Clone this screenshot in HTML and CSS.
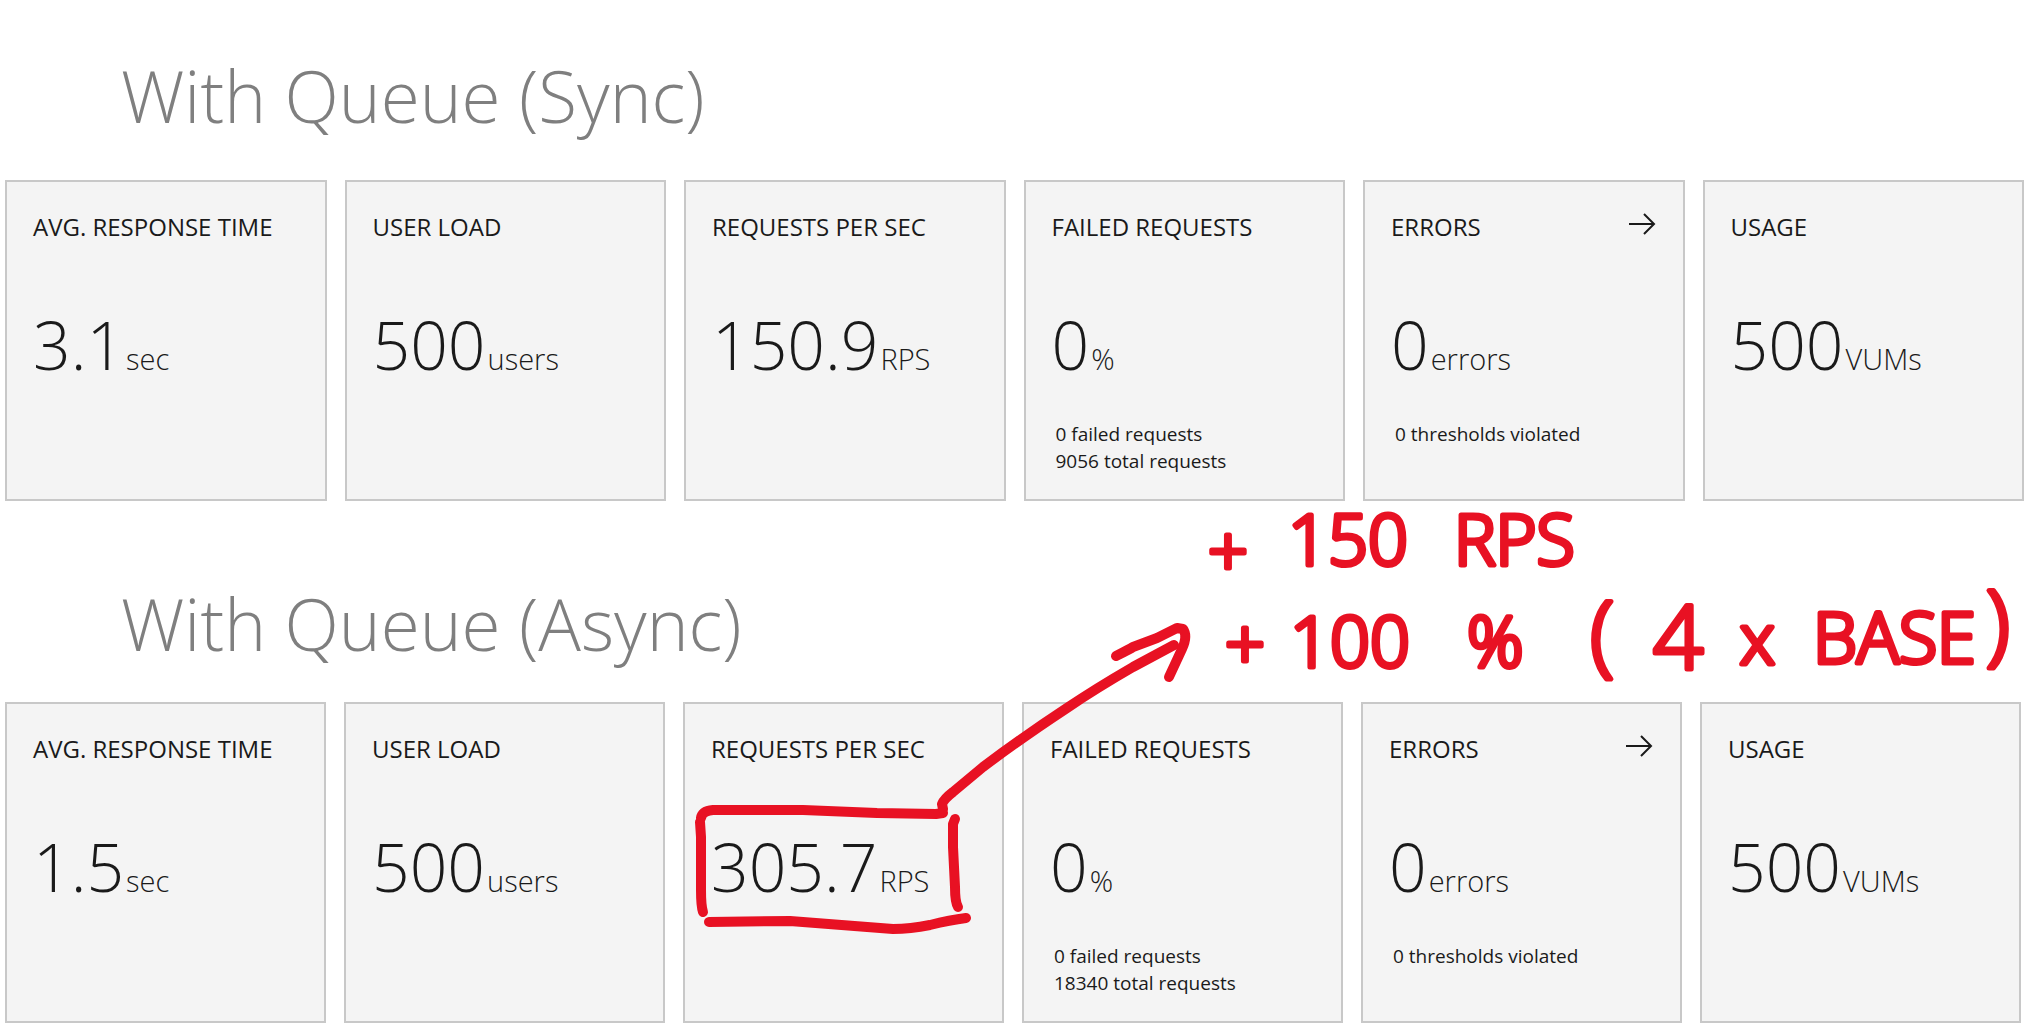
FILE: index.html
```html
<!DOCTYPE html>
<html lang="en">
<head>
<meta charset="utf-8">
<title>Load test results</title>
<link rel="stylesheet" href="styles.css">
</head>
<body>
<main class="board">
  <section class="run">
    <h1 class="run-title">With Queue (Sync)</h1>
    <div class="cards">
      <article class="card">
        <h2 class="card-title">AVG. RESPONSE TIME</h2>
        <p class="metric"><span class="value">3.1</span><span class="unit">sec</span></p>
      </article>
      <article class="card">
        <h2 class="card-title">USER LOAD</h2>
        <p class="metric"><span class="value">500</span><span class="unit">users</span></p>
      </article>
      <article class="card">
        <h2 class="card-title">REQUESTS PER SEC</h2>
        <p class="metric"><span class="value">150.9</span><span class="unit">RPS</span></p>
      </article>
      <article class="card">
        <h2 class="card-title">FAILED REQUESTS</h2>
        <p class="metric"><span class="value">0</span><span class="unit">%</span></p>
        <p class="notes">0 failed requests<br>9056 total requests</p>
      </article>
      <article class="card">
        <div class="card-head">
          <h2 class="card-title">ERRORS</h2>
          <a class="more" href="#errors-sync" aria-label="Show errors"><svg class="more-icon" viewBox="0 0 28 22"><path d="M1 11H26M16 1L26 11L16 21"/></svg></a>
        </div>
        <p class="metric"><span class="value">0</span><span class="unit">errors</span></p>
        <p class="notes">0 thresholds violated</p>
      </article>
      <article class="card">
        <h2 class="card-title">USAGE</h2>
        <p class="metric"><span class="value">500</span><span class="unit">VUMs</span></p>
      </article>
    </div>
  </section>

  <section class="run run-async">
    <h1 class="run-title">With Queue (Async)</h1>
    <div class="cards">
      <article class="card">
        <h2 class="card-title">AVG. RESPONSE TIME</h2>
        <p class="metric"><span class="value">1.5</span><span class="unit">sec</span></p>
      </article>
      <article class="card">
        <h2 class="card-title">USER LOAD</h2>
        <p class="metric"><span class="value">500</span><span class="unit">users</span></p>
      </article>
      <article class="card">
        <h2 class="card-title">REQUESTS PER SEC</h2>
        <p class="metric"><span class="value">305.7</span><span class="unit">RPS</span></p>
      </article>
      <article class="card">
        <h2 class="card-title">FAILED REQUESTS</h2>
        <p class="metric"><span class="value">0</span><span class="unit">%</span></p>
        <p class="notes">0 failed requests<br>18340 total requests</p>
      </article>
      <article class="card">
        <div class="card-head">
          <h2 class="card-title">ERRORS</h2>
          <a class="more" href="#errors-async" aria-label="Show errors"><svg class="more-icon" viewBox="0 0 28 22"><path d="M1 11H26M16 1L26 11L16 21"/></svg></a>
        </div>
        <p class="metric"><span class="value">0</span><span class="unit">errors</span></p>
        <p class="notes">0 thresholds violated</p>
      </article>
      <article class="card">
        <h2 class="card-title">USAGE</h2>
        <p class="metric"><span class="value">500</span><span class="unit">VUMs</span></p>
      </article>
    </div>
  </section>

  <!-- Red pen annotations over the cards -->
  <svg class="ink" viewBox="0 0 2040 1033">
    <g class="pen">
      <path d="M701 818Q702 811 713 810L803 810L877 813L936 814L943 813"/>
      <path d="M700 822L701 837L701 890Q701 906 703 912"/>
      <path d="M955 819L953 824L953 847L955 887Q955 902 958 907"/>
      <path d="M709 922L790 921L893 929Q910 929 930 925Q950 920 966 918"/>
      <path d="M943 809L942 804Q944 799 953 792L983 767Q1020 739 1067 708Q1095 689 1133 667L1174 645"/>
      <path d="M1116 656Q1130 649 1133 647L1157 638L1177 628L1183 629Q1188 636 1182 649Q1176 662 1169 677"/>
    </g>
    <text class="pen-text"><tspan x="1208" y="576">+</tspan><tspan x="1288" y="565">150</tspan><tspan x="1454" y="565">RPS</tspan></text>
    <text class="pen-text"><tspan x="1225" y="669">+</tspan><tspan x="1290" y="667">100</tspan><tspan x="1467" y="667">%</tspan><tspan class="pen-tall" x="1590" y="665">(</tspan><tspan class="pen-tall" x="1653" y="669">4</tspan><tspan x="1740" y="664">x</tspan><tspan x="1813" y="663">BASE</tspan><tspan class="pen-tall" x="1986" y="654">)</tspan></text>
  </svg>
</main>
</body>
</html>
```

FILE: styles.css
```css
* {
  box-sizing: border-box;
}

body {
  margin: 0;
  background: #fff;
  color: #1a1a1a;
  font-family: "Open Sans", "Noto Sans", sans-serif;
}

h1, h2, p {
  margin: 0;
}

.board {
  position: relative;
  padding: 46px 0 10px;
}

.run {
  padding: 0 16px 0 5px;
}

.run-title {
  margin: 0 0 34px 116px;
  color: #7f7f7f;
  font-size: 71px;
  font-weight: 300;
  line-height: 100px;
}

.run-async {
  margin-top: 73px;
  padding-right: 19px;
}

.run-async .run-title {
  margin-bottom: 28px;
}

.cards {
  display: grid;
  grid-template-columns: repeat(6, 1fr);
  gap: 18px;
}

.card {
  min-height: 321px;
  padding: 28px 27px 24px 26px;
  border: 2px solid #c8c8c8;
  background: #f4f4f4;
}

.card-head {
  display: flex;
  justify-content: space-between;
}

.card-title {
  font-size: 24px;
  font-weight: 400;
  line-height: 34px;
  white-space: nowrap;
}

.more {
  display: block;
  height: 28px;
  padding-top: 3px;
}

.more-icon {
  display: block;
  width: 28px;
  height: 22px;
  fill: none;
  stroke: #1a1a1a;
  stroke-width: 2;
}

.metric {
  display: flex;
  gap: 2px;
  align-items: baseline;
  margin-top: 52px;
  font-weight: 300;
  line-height: 96px;
  white-space: nowrap;
}

.value {
  font-size: 66px;
}

.unit {
  font-size: 29px;
  line-height: 40px;
}

.notes {
  margin: 29px 0 0 4px;
  font-size: 19px;
  line-height: 27px;
}

.ink {
  position: absolute;
  top: 0;
  left: 0;
  width: 100%;
  pointer-events: none;
}

.pen {
  fill: none;
  stroke: #e81123;
  stroke-width: 10;
  stroke-linecap: round;
  stroke-linejoin: round;
}

.pen-text {
  fill: #e81123;
  stroke: #e81123;
  stroke-width: 5;
  stroke-linejoin: round;
  font-size: 70px;
  font-weight: 300;
}

.pen-tall {
  font-size: 88px;
}
```
